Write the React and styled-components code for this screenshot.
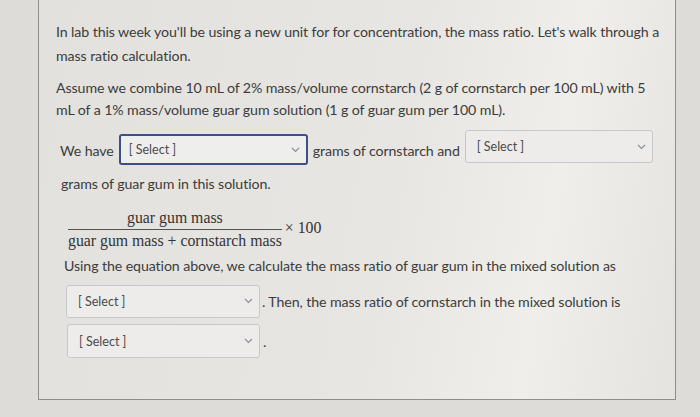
import React from "react";
import styled, { createGlobalStyle } from "styled-components";

const Global = createGlobalStyle`
  html, body { margin: 0; padding: 0; }
  body {
    background: #dedcd8;
    font-family: Lato, "Open Sans", sans-serif;
    color: #3c3c3c;
    width: 700px;
    height: 417px;
    overflow: hidden;
  }
`;

const Page = styled.div`
  width: 700px;
  height: 417px;
  display: flex;
  align-items: flex-start;
  padding-left: 38px;
  box-sizing: border-box;
`;

const Panel = styled.div`
  width: 638px;
  height: 400px;
  box-sizing: border-box;
  border: 1px solid #8e8d89;
  border-top: none;
  background: linear-gradient(100deg, #e2e1dd 0%, #e7e6e2 55%, #efeeea 78%, #e9e8e4 90%, #e4e3df 100%);
  padding: 20px 0 0 17px;
  display: flex;
  flex-direction: column;
  font-size: 14.2px;
  letter-spacing: -0.1px;
`;

const Para = styled.p`
  margin: ${p => p.$mt || 0}px 0 ${p => p.$mb || 0}px 0;
  padding-left: ${p => p.$indent || 0}px;
  line-height: ${p => p.$lh || 24}px;
  width: 610px;
`;

const Row = styled.div`
  display: flex;
  align-items: center;
  gap: 5px;
  height: 34px;
  margin-top: ${p => p.$mt || 0}px;
  padding-left: ${p => p.$indent || 0}px;
`;

const SelectBox = styled.div`
  width: ${p => p.$w || 190}px;
  height: ${p => p.$h || 32}px;
  box-sizing: border-box;
  border: ${p => (p.$focus ? "2px solid #3e4f86" : "1px solid #c6c8c9")};
  border-radius: 3px;
  background: ${p => (p.$focus ? "#eeeeec" : "#edecea")};
  display: flex;
  align-items: center;
  justify-content: space-between;
  padding: 0 6px 0 ${p => (p.$focus ? 8 : 11)}px;
  font-size: 12.5px;
  letter-spacing: 0;
  color: #4a4a4a;
  flex-shrink: 0;
  margin-top: ${p => p.$shift || 0}px;
`;

const Chevron = () => (
  <svg width="9" height="6" viewBox="0 0 9 6" fill="none">
    <path d="M1 1l3.5 3.5L8 1" stroke="#8a8f99" strokeWidth="1.2" />
  </svg>
);

const Select = (props) => (
  <SelectBox {...props}>
    <span>[ Select ]</span>
    <Chevron />
  </SelectBox>
);

const Formula = styled.div`
  display: flex;
  align-items: center;
  margin: 12px 0 0 12px;
  font-family: "Liberation Serif", "Times New Roman", serif;
  font-size: 15.8px;
  letter-spacing: 0;
  color: #333;
`;

const Fraction = styled.div`
  display: flex;
  flex-direction: column;
  align-items: center;
`;

const Num = styled.div`
  line-height: 19px;
  padding: 0 4px 2px;
`;

const Den = styled.div`
  line-height: 19px;
  border-top: 1px solid #555;
  padding-top: 1px;
`;

const Times = styled.span`
  margin-left: 3px;
  margin-top: -3px;
`;

const Text = styled.span`
  white-space: nowrap;
`;

export default function App() {
  return (
    <>
      <Global />
      <Page>
        <Panel>
          <Para $mb={9}>
            In lab this week you'll be using a new unit for for concentration, the mass ratio. Let's walk through a mass ratio calculation.
          </Para>
          <Para $lh={22}>
            Assume we combine 10 mL of 2% mass/volume cornstarch (2 g of cornstarch per 100 mL) with 5 mL of a 1% mass/volume guar gum solution (1 g of guar gum per 100 mL).
          </Para>
          <Row $mt={12} $indent={4}>
            <Text>We have</Text>
            <Select $focus $w={189} $h={31} $shift={-1} />
            <Text>grams of cornstarch and</Text>
            <Select $w={188} $h={33} $shift={-7} />
          </Row>
          <Para $mt={5} $indent={5}>grams of guar gum in this solution.</Para>
          <Formula>
            <Fraction>
              <Num>guar gum mass</Num>
              <Den>guar gum mass + cornstarch mass</Den>
            </Fraction>
            <Times>× 100</Times>
          </Formula>
          <Para $mt={4} $indent={8}>
            Using the equation above, we calculate the mass ratio of guar gum in the mixed solution as
          </Para>
          <Row $mt={6} $indent={10} style={{ gap: 2 }}>
            <Select $w={194} $h={33} />
            <Text>. Then, the mass ratio of cornstarch in the mixed solution is</Text>
          </Row>
          <Row $mt={6} $indent={11} style={{ gap: 3 }}>
            <Select $w={193} $h={34} />
            <Text>.</Text>
          </Row>
        </Panel>
      </Page>
    </>
  );
}
